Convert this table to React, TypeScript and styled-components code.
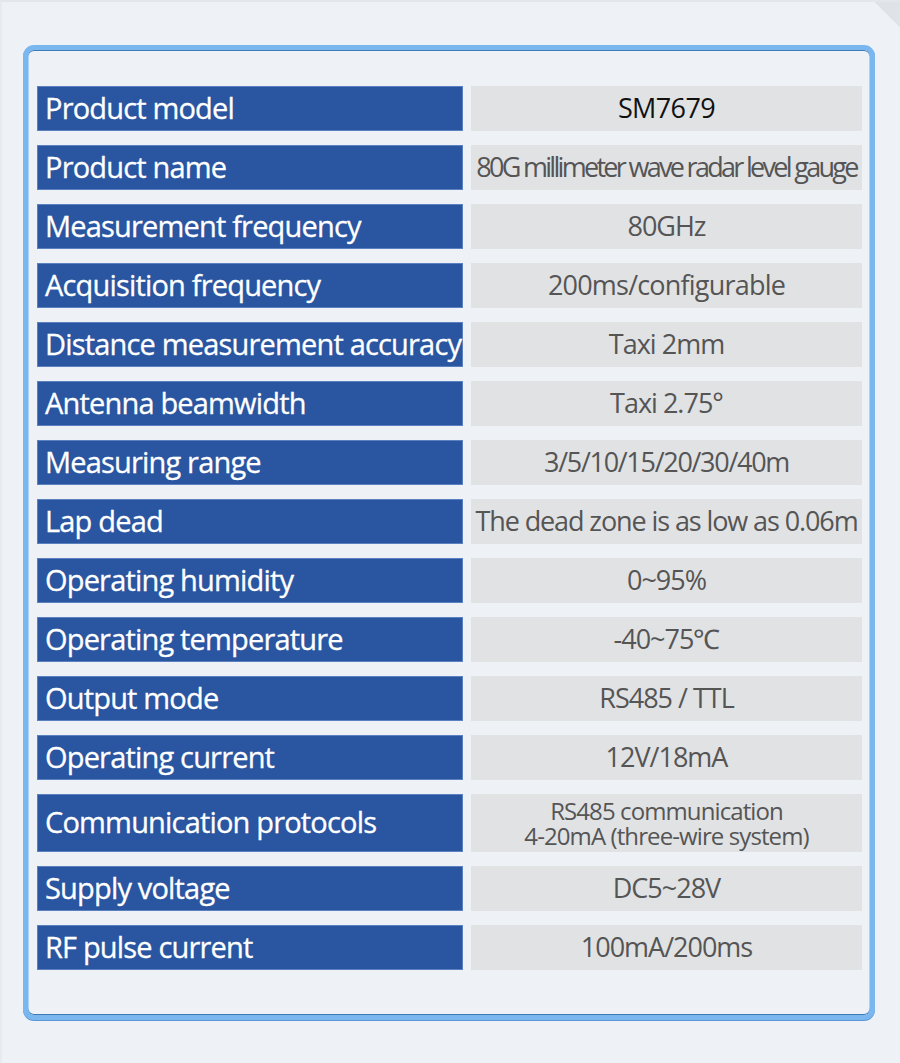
import React from "react";
import styled, { createGlobalStyle } from "styled-components";

const Global = createGlobalStyle`
  html, body { margin: 0; padding: 0; background: #eef2f7; }
  body { font-family: "Open Sans", "Liberation Sans", sans-serif; }
`;

const Page = styled.div`
  width: 900px;
  height: 1063px;
  box-sizing: border-box;
  padding: 43px 25px 0 21px;
  background: linear-gradient(225deg, #dfe3e8 0 18px, #eef2f7 18px);
  border-top: 2px solid #e3e6ea;
  border-left: 2px solid #e7eaee;
`;

const Frame = styled.div`
  box-sizing: border-box;
  width: 852px;
  height: 975px;
  border: 5px solid #7ab7ef;
  border-radius: 11px;
  box-shadow: inset 0 1px 0 #3f79b6, inset 0 -1px 0 #3f79b6, inset 1px 0 0 #a9d3f8,
    inset -1px 0 0 #a9d3f8, 0 1px 0 #5b97d6;
  padding: 36px 8px 0 9px;
  background: #eef2f7;
`;

const Table = styled.div`
  display: flex;
  flex-direction: column;
  gap: 14px;
`;

const Row = styled.div<{ $tall?: boolean }>`
  display: grid;
  grid-template-columns: 426px 391px;
  column-gap: 8px;
  height: ${(p) => (p.$tall ? 58 : 45)}px;
`;

const Label = styled.div`
  background: #2a55a0;
  box-shadow: inset 0 0 0 1px #5a80c0;
  color: #ffffff;
  display: flex;
  align-items: center;
  padding: 0 0 3px 8px;
  font-size: 29px;
  font-weight: 400;
  letter-spacing: -0.82px;
  white-space: nowrap;
  -webkit-text-stroke: 0.3px #ffffff;
`;

const Value = styled.div<{ $dark?: boolean; $tight?: number; $small?: boolean }>`
  background: #e1e2e4;
  color: ${(p) => (p.$dark ? "#111111" : "#555555")};
  display: flex;
  flex-direction: column;
  align-items: center;
  justify-content: center;
  text-align: center;
  padding-bottom: ${(p) => (p.$small ? 0 : 2)}px;
  font-size: ${(p) => (p.$small ? 24 : 27)}px;
  line-height: ${(p) => (p.$small ? 25 : 30)}px;
  letter-spacing: ${(p) => p.$tight ?? -1}px;
  white-space: nowrap;
`;

type Item = { k: string; v: string[]; dark?: boolean; tight?: number; tall?: boolean };

const rows: Item[] = [
  { k: "Product model", v: ["SM7679"], dark: true, tight: -0.6 },
  { k: "Product name", v: ["80G millimeter wave radar level gauge"], tight: -2.7 },
  { k: "Measurement frequency", v: ["80GHz"] },
  { k: "Acquisition frequency", v: ["200ms/configurable"], tight: -0.8 },
  { k: "Distance measurement accuracy", v: ["Taxi 2mm"] },
  { k: "Antenna beamwidth", v: ["Taxi 2.75°"] },
  { k: "Measuring range", v: ["3/5/10/15/20/30/40m"], tight: -1.3 },
  { k: "Lap dead", v: ["The dead zone is as low as 0.06m"], tight: -1.1 },
  { k: "Operating humidity", v: ["0~95%"] },
  { k: "Operating temperature", v: ["-40~75℃"] },
  { k: "Output mode", v: ["RS485 / TTL"] },
  { k: "Operating current", v: ["12V/18mA"] },
  { k: "Communication protocols", v: ["RS485 communication", "4-20mA (three-wire system)"], tall: true, tight: -0.9 },
  { k: "Supply voltage", v: ["DC5~28V"] },
  { k: "RF pulse current", v: ["100mA/200ms"] },
];

export default function App() {
  return (
    <>
      <Global />
      <Page>
        <Frame>
          <Table>
            {rows.map((r) => (
              <Row key={r.k} $tall={r.tall}>
                <Label>{r.k}</Label>
                <Value $dark={r.dark} $tight={r.tight} $small={r.tall}>
                  {r.v.map((line) => (
                    <span key={line}>{line}</span>
                  ))}
                </Value>
              </Row>
            ))}
          </Table>
        </Frame>
      </Page>
    </>
  );
}
